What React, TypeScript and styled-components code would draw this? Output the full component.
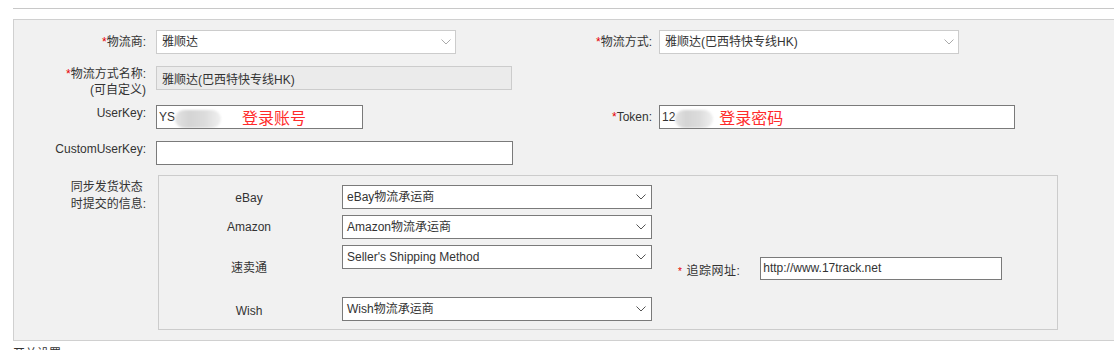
import React from 'react';
import styled, { createGlobalStyle } from 'styled-components';

const GlobalStyle = createGlobalStyle`
  html, body { margin: 0; padding: 0; background: #fff; overflow: hidden; }
  body {
    font-family: "Liberation Sans", Arial, "Noto Sans CJK SC", sans-serif;
    font-size: 12px;
    color: #333;
  }
`;

const Page = styled.div`
  padding: 8px 0 0 13px;
  width: 1130px;
`;

const TopRule = styled.div`
  border-top: 1px solid #c8c8c8;
  margin-bottom: 10px;
`;

const Panel = styled.div`
  box-sizing: border-box;
  width: 1112px;
  background: #f1f1f1;
  border: 1px solid #d0d0d0;
  padding: 10px 0;
`;

const Row = styled.div<{ $mt?: number }>`
  display: grid;
  grid-template-columns: 132px 414px 92px 1fr;
  align-items: center;
  margin-top: ${p => p.$mt ?? 0}px;
`;

const Label = styled.div<{ $top?: boolean }>`
  text-align: right;
  line-height: 16px;
  white-space: nowrap;
  align-self: ${p => (p.$top ? 'start' : 'center')};
`;

const BlockLabel = styled.div`
  text-align: right;
  align-self: start;
  padding-top: 4px;
`;

const BlockLabelInner = styled.span`
  display: inline-block;
  text-align: left;
  line-height: 17px;
`;

const Req = styled.span<{ $small?: boolean }>`
  color: #e60000;
  font-size: ${p => (p.$small ? '10px' : '12px')};
  margin-right: ${p => (p.$small ? '4px' : '0')};
`;

const Field = styled.div<{ $ml: number; $top?: boolean }>`
  margin-left: ${p => p.$ml}px;
  display: flex;
  align-self: ${p => (p.$top ? 'start' : 'center')};
`;

const SelectBox = styled.div<{ $w: number; $dark?: boolean }>`
  box-sizing: border-box;
  width: ${p => p.$w}px;
  height: 24px;
  background: #fff;
  border: 1px solid ${p => (p.$dark ? '#7a7a7a' : '#cccccc')};
  display: flex;
  align-items: center;
  justify-content: space-between;
  padding: 0 ${p => (p.$dark ? '5px' : '4px')} 0 ${p => (p.$dark ? '4px' : '5px')};
  line-height: 16px;
  white-space: nowrap;
`;

const ReadonlyBox = styled.div<{ $w: number }>`
  box-sizing: border-box;
  width: ${p => p.$w}px;
  height: 24px;
  background: #ebebeb;
  border: 1px solid #cccccc;
  display: flex;
  align-items: center;
  padding-left: 5px;
`;

const TextBox = styled.div<{ $w: number; $h?: number }>`
  box-sizing: border-box;
  width: ${p => p.$w}px;
  height: ${p => p.$h ?? 24}px;
  background: #fff;
  border: 1px solid #7a7a7a;
  display: flex;
  align-items: center;
  padding-left: 2px;
  white-space: nowrap;
  overflow: hidden;
`;

const Smudge = styled.span<{ $w: number }>`
  display: inline-block;
  width: ${p => p.$w}px;
  height: 18px;
  margin-top: 4px;
  border-radius: 9px;
  background: linear-gradient(90deg, #e4e4e4 0%, #d4d4d4 30%, #dcdcdc 65%, #f0f0f0 100%);
  filter: blur(1.2px);
`;

const Note = styled.span<{ $ml: number }>`
  margin-left: ${p => p.$ml}px;
  color: #ff2b2b;
  font-family: "Noto Sans CJK SC", sans-serif;
  font-size: 16px;
  line-height: 20px;
`;

const InnerWrap = styled.div`
  grid-column: 2 / 5;
`;

const InnerBox = styled.div`
  box-sizing: border-box;
  width: 900px;
  margin-left: 12px;
  border: 1px solid #cccccc;
  padding: 9px 0 8px;
  display: grid;
  grid-template-columns: 180px 310px 1fr;
  grid-template-rows: 24px 24px 46px 24px;
  column-gap: 3px;
  row-gap: 6px;
`;

const SiteLabel = styled.div<{ $row: number; $shift?: number }>`
  grid-column: 1;
  grid-row: ${p => p.$row};
  text-align: center;
  align-self: center;
  line-height: 16px;
  padding-top: ${p => p.$shift ?? 0}px;
`;

const SiteSelect = styled.div<{ $row: number }>`
  grid-column: 2;
  grid-row: ${p => p.$row};
  align-self: start;
`;

const Track = styled.div`
  grid-column: 3;
  grid-row: 3;
  display: flex;
  align-items: center;
  padding-left: 23px;
`;

const TrackLabel = styled.span`
  line-height: 16px;
  padding-top: 7px;
  letter-spacing: 0.5px;
`;

const TrackInput = styled(TextBox)`
  margin-left: 20px;
`;

const Footer = styled.div`
  margin-top: 5px;
  line-height: 16px;
  font-size: 12px;
  color: #333;
`;

const Chevron: React.FC<{ dark?: boolean }> = ({ dark }) => (
  <svg width="10" height="6" viewBox="0 0 10 6" aria-hidden="true">
    <polyline
      points="0.5,0.5 5,5 9.5,0.5"
      fill="none"
      stroke={dark ? '#555' : '#aaa'}
      strokeWidth="1"
    />
  </svg>
);

const sites = [
  { row: 1, name: 'eBay', value: 'eBay物流承运商', shift: 1 },
  { row: 2, name: 'Amazon', value: 'Amazon物流承运商', shift: 0 },
  { row: 3, name: '速卖通', value: "Seller's Shipping Method", shift: 0 },
  { row: 4, name: 'Wish', value: 'Wish物流承运商', shift: 3 },
];

export default function App() {
  return (
    <>
      <GlobalStyle />
      <Page>
        <TopRule />
        <Panel>
          <Row>
            <Label>
              <Req>*</Req>物流商:
            </Label>
            <Field $ml={10}>
              <SelectBox $w={300}>
                <span>雅顺达</span>
                <Chevron />
              </SelectBox>
            </Field>
            <Label>
              <Req>*</Req>物流方式:
            </Label>
            <Field $ml={7}>
              <SelectBox $w={300}>
                <span>雅顺达(巴西特快专线HK)</span>
                <Chevron />
              </SelectBox>
            </Field>
          </Row>

          <Row $mt={12}>
            <Label $top>
              <Req>*</Req>物流方式名称:
              <br />
              (可自定义)
            </Label>
            <Field $ml={10} $top>
              <ReadonlyBox $w={356}>雅顺达(巴西特快专线HK)</ReadonlyBox>
            </Field>
          </Row>

          <Row $mt={7}>
            <Label $top>UserKey:</Label>
            <Field $ml={10}>
              <TextBox $w={207}>
                <span>YS</span>
                <Smudge $w={46} />
                <Note $ml={21}>登录账号</Note>
              </TextBox>
            </Field>
            <Label>
              <Req>*</Req>Token:
            </Label>
            <Field $ml={7}>
              <TextBox $w={356}>
                <span>12</span>
                <Smudge $w={38} />
                <Note $ml={6}>登录密码</Note>
              </TextBox>
            </Field>
          </Row>

          <Row $mt={12}>
            <Label $top>CustomUserKey:</Label>
            <Field $ml={10}>
              <TextBox $w={357} />
            </Field>
          </Row>

          <Row $mt={10}>
            <BlockLabel>
              <BlockLabelInner>
                同步发货状态
                <br />
                时提交的信息:
              </BlockLabelInner>
            </BlockLabel>
            <InnerWrap>
              <InnerBox>
                {sites.map(s => (
                  <React.Fragment key={s.name}>
                    <SiteLabel $row={s.row} $shift={s.shift}>{s.name}</SiteLabel>
                    <SiteSelect $row={s.row}>
                      <SelectBox $w={310} $dark>
                        <span>{s.value}</span>
                        <Chevron dark />
                      </SelectBox>
                    </SiteSelect>
                  </React.Fragment>
                ))}
                <Track>
                  <TrackLabel>
                    <Req $small>*</Req>追踪网址:
                  </TrackLabel>
                  <TrackInput $w={242} $h={23}>
                    http://www.17track.net
                  </TrackInput>
                </Track>
              </InnerBox>
            </InnerWrap>
          </Row>
        </Panel>
        <Footer>开关设置</Footer>
      </Page>
    </>
  );
}
